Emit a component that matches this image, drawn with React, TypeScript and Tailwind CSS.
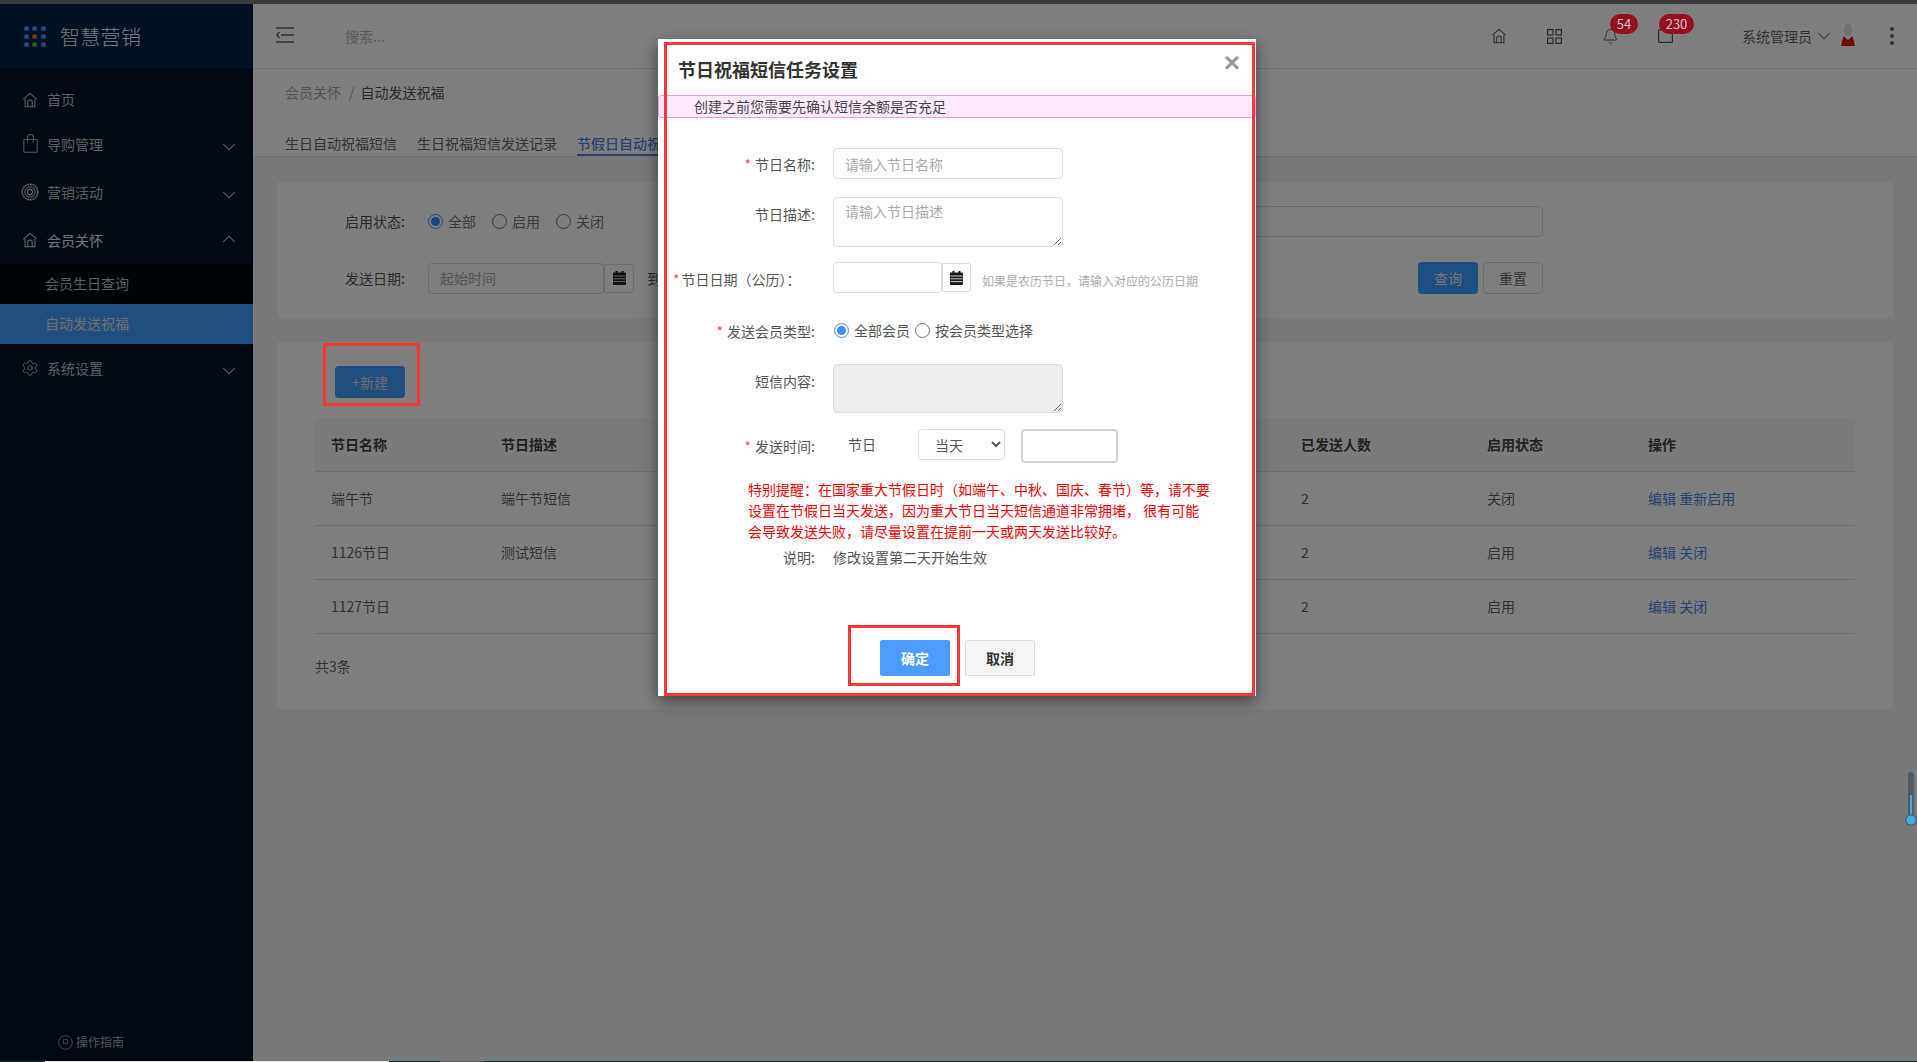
import React from "react";
import { ChevronDown, ChevronUp, Settings, Bell } from "lucide-react";

function HomeIcon({ size = 18, color = "#cfcfcf" }: { size?: number; color?: string }) {
  return (
    <svg width={size} height={size} viewBox="0 0 18 18" fill="none" stroke={color} strokeWidth="1.2">
      <path d="M1.5 8 L9 1.5 L16.5 8" />
      <path d="M3.5 8 V16.5 H14.5 V8" />
      <path d="M6.5 16.5 V11.5 a2.5 2.5 0 0 1 5 0 V16.5" />
    </svg>
  );
}

function BagIcon() {
  return (
    <svg width="15" height="19" viewBox="0 0 15 19" fill="none" stroke="#a8a8a8" strokeWidth="1.1" className="mt-[-2px]">
      <rect x="0.8" y="5.5" width="13.4" height="12.7" rx="0.8" />
      <path d="M4.5 8.5 V3.5 a3 3 0 0 1 6 0 V8.5" />
    </svg>
  );
}

function TargetIcon() {
  return (
    <svg width="18" height="18" viewBox="0 0 18 18" fill="none" stroke="#bdbdbd" strokeWidth="1.1">
      <circle cx="9" cy="9" r="7.8" strokeWidth="1.6" strokeDasharray="2 0.6" />
      <circle cx="9" cy="9" r="5.2" />
      <circle cx="9" cy="9" r="2.6" />
    </svg>
  );
}

function CalIcon() {
  return (
    <svg width="13" height="14" viewBox="0 0 13 14">
      <rect x="2.5" y="0" width="2" height="3" fill="#1c1c1c" />
      <rect x="8.5" y="0" width="2" height="3" fill="#1c1c1c" />
      <rect x="0" y="1.5" width="13" height="12.5" rx="0.8" fill="#1c1c1c" />
      <path d="M0.5 5 H12.5 M0.5 7.8 H12.5 M0.5 10.6 H12.5" stroke="#ffffff" strokeWidth="0.8" />
    </svg>
  );
}

function NavItem({ icon, label, open, chevron, bright }: { icon: React.ReactNode; label: string; open?: boolean; chevron?: boolean; bright?: boolean }) {
  return (
    <div className={`flex h-[48px] items-center pl-[21px] pr-[13px] text-[14px] leading-[20px] ${bright ? "text-[#e8e8e8]" : "text-[#bdbdbd]"}`}>
      <span className="flex w-[18px] justify-center">{icon}</span>
      <span className="mt-[-1px] ml-[8px] flex-1">{label}</span>
      {chevron && (open ? <ChevronUp size={22} strokeWidth={1.1} className="mt-[-2px] text-[#dddddd]" /> : <ChevronDown size={22} strokeWidth={1.1} className="mt-[6px] text-[#dddddd]" />)}
    </div>
  );
}

function Sidebar() {
  const dots = ["#3f8fff", "#3f8fff", "#3f8fff", "#3f8fff", "#e8741a", "#3f8fff", "#3f8fff", "#46b034", "#3f8fff"];
  return (
    <aside className="flex w-[253px] shrink-0 flex-col bg-[#021428]">
      <div className="flex h-[64px] items-center bg-[#062246] pl-[24px]">
        <div className="grid w-[22px] grid-cols-3 gap-[3px]">
          {dots.map((c, i) => (
            <span key={i} className="h-[5px] w-[5px] rounded-full" style={{ backgroundColor: c }} />
          ))}
        </div>
        <span className="mt-[2px] ml-[14px] text-[20px] leading-[28px] font-light tracking-[0.3px] text-[#f0f0f0]">智慧营销</span>
      </div>
      <div className="mt-[12px] flex h-[40px] items-center pl-[21px] text-[14px] leading-[20px] text-[#bdbdbd]">
        <span className="flex w-[18px] justify-center"><HomeIcon size={16} color="#bdbdbd" /></span>
        <span className="mt-[-2px] ml-[8px]">首页</span>
      </div>
      <NavItem icon={<BagIcon />} label="导购管理" chevron />
      <NavItem icon={<TargetIcon />} label="营销活动" chevron />
      <NavItem icon={<HomeIcon size={16} color="#cfcfcf" />} label="会员关怀" chevron open bright />
      <div className="flex h-[40px] items-center bg-[#00060e] pb-[2px] pl-[45px] text-[14px] text-[#bdbdbd]">会员生日查询</div>
      <div className="flex h-[40px] items-center bg-[#409eff] pb-[1px] pl-[45px] text-[14px] text-[#e0e0e0]">自动发送祝福</div>
      <NavItem icon={<Settings size={18} strokeWidth={1.3} />} label="系统设置" chevron />
      <div className="mt-auto mb-[9px] flex h-[20px] items-center pl-[58px] text-[12px] text-[#a8a8a8]">
        <svg width="15" height="15" viewBox="0 0 15 15" fill="none" stroke="#8a8a8a">
          <circle cx="7.5" cy="7.5" r="6.8" />
          <path d="M5.5 4.5 H9.5 V8.5 H5.5 Z" strokeWidth="0.9" />
        </svg>
        <span className="ml-[3px]">操作指南</span>
      </div>
    </aside>
  );
}

function HeaderBar() {
  return (
    <div className="flex h-[64px] items-center bg-white pl-[23px] text-[#666666]">
      <svg width="18" height="16" viewBox="0 0 18 16" fill="none" stroke="#555555" strokeWidth="1.3" className="mt-[-3px]">
        <path d="M0 1 H18" />
        <path d="M5 8 H18" />
        <path d="M0 15 H18" />
        <path d="M3.5 5 L0.8 8 L3.5 11" />
      </svg>
      <span className="ml-[51px] text-[14px] text-[#b8b8b8]">搜索...</span>
      <div className="ml-auto flex items-center">
        <HomeIcon size={16} color="#555555" />
        <svg width="15" height="15" viewBox="0 0 15 15" fill="none" stroke="#555555" strokeWidth="1.2" className="ml-[40px]">
          <rect x="0.6" y="0.6" width="5.4" height="5.4" />
          <rect x="9" y="0.6" width="5.4" height="5.4" />
          <rect x="0.6" y="9" width="5.4" height="5.4" />
          <rect x="9" y="9" width="5.4" height="5.4" />
        </svg>
        <Bell size={17} strokeWidth={1.3} className="ml-[40px] text-[#555555]" />
        <svg width="15" height="14" viewBox="0 0 15 14" fill="none" stroke="#555555" strokeWidth="1.2" className="ml-[39px]">
          <rect x="0.6" y="0.6" width="13.8" height="12.8" rx="1" />
        </svg>
        <span className="ml-[69px] text-[14px] leading-[20px] text-[#666666]">系统管理员</span>
        <ChevronDown size={22} strokeWidth={1.1} className="ml-px text-[#666666]" />
        <svg width="20" height="24" viewBox="0 0 20 24" className="ml-[3px] mt-[-3px]">
          <ellipse cx="10" cy="7" rx="4" ry="6.5" fill="#f0e0e0" />
          <path d="M3 23 L5.5 13 L10 17 L14.5 13 L17 23 Z" fill="#e01515" />
          <path d="M8.6 12 L11.4 12 L10 17 Z" fill="#ffffff" />
        </svg>
        <div className="ml-[32px] mr-[23px] flex flex-col gap-[3px]">
          <span className="h-[4px] w-[4px] rounded-full bg-[#707070]" />
          <span className="h-[4px] w-[4px] rounded-full bg-[#707070]" />
          <span className="h-[4px] w-[4px] rounded-full bg-[#707070]" />
        </div>
      </div>
    </div>
  );
}

function Radio({ label, checked }: { label: string; checked?: boolean }) {
  return (
    <label className="flex items-center">
      <input type="radio" name="status" defaultChecked={checked} className="h-[15px] w-[15px] accent-[#3f8cff]" />
      <span className="ml-[5px] text-[14px] text-[#777777]">{label}</span>
    </label>
  );
}

function Filter() {
  return (
    <section className="mx-[24px] mt-[25px] h-[136px] bg-white pt-[24px] pl-[68px] pr-[350px]">
      <div className="flex h-[31px] items-center">
        <span className="w-[83px] text-[14px] text-[#555555]">启用状态:</span>
        <div className="flex gap-[16px]">
          <Radio label="全部" checked />
          <Radio label="启用" />
          <Radio label="关闭" />
        </div>
        <div className="ml-auto h-[31px] w-[500px] rounded-[4px] border border-[#d8d8d8]" />
      </div>
      <div className="mt-[25px] flex h-[32px] items-center">
        <span className="w-[83px] text-[14px] text-[#555555]">发送日期:</span>
        <div className="flex h-[31px] w-[176px] items-center rounded-[4px] border border-[#d8d8d8] pl-[11px] text-[14px] text-[#aaaaaa]">起始时间</div>
        <div className="flex h-[29px] w-[30px] items-center justify-center rounded-r-[3px] border border-[#d8d8d8]">
          <CalIcon />
        </div>
        <span className="ml-[13px] text-[14px] text-[#555555]">到</span>
        <button className="ml-auto h-[32px] w-[60px] rounded-[4px] bg-[#409eff] text-[14px] text-[#eeeeee]">查询</button>
        <button className="ml-[5px] h-[32px] w-[60px] rounded-[4px] border border-[#d8d8d8] bg-white text-[14px] text-[#666666]">重置</button>
      </div>
    </section>
  );
}

function Table() {
  const rows = [
    ["端午节", "端午节短信", "2", "关闭", "编辑 重新启用"],
    ["1126节日", "测试短信", "2", "启用", "编辑 关闭"],
    ["1127节日", "", "2", "启用", "编辑 关闭"],
  ];
  return (
    <table className="w-[1540px] table-fixed text-[14px]">
      <colgroup>
        <col className="w-[170px]" />
        <col className="w-[800px]" />
        <col className="w-[186px]" />
        <col className="w-[161px]" />
        <col className="w-[223px]" />
      </colgroup>
      <thead>
        <tr className="h-[53px] border-b border-[#dcdcdc] bg-[#f6f6f6] text-left font-bold text-[#444444]">
          <th className="pl-[16px]">节日名称</th>
          <th className="pl-[16px]">节日描述</th>
          <th className="pl-[16px]">已发送人数</th>
          <th className="pl-[16px]">启用状态</th>
          <th className="pl-[16px]">操作</th>
        </tr>
      </thead>
      <tbody>
        {rows.map((r) => (
          <tr key={r[0]} className="h-[54px] border-b border-[#dcdcdc] text-[#666666]">
            <td className="pl-[16px]">{r[0]}</td>
            <td className="pl-[16px]">{r[1]}</td>
            <td className="pl-[16px]">{r[2]}</td>
            <td className="pl-[16px]">{r[3]}</td>
            <td className="pl-[16px] text-[#4a86e0]">{r[4]}</td>
          </tr>
        ))}
      </tbody>
    </table>
  );
}

function FormRow({ label, star, top, className, children }: { label: string; star?: boolean; top: number; className: string; children: React.ReactNode }) {
  return (
    <div className={`flex items-start ${className}`}>
      <div className="w-[157px] shrink-0 text-right text-[14px] leading-[20px] text-[#555555]" style={{ paddingTop: top }}>
        {star && <span className="mr-[4px] text-[#ff4d4f]">*</span>}
        {label}
      </div>
      <div className="ml-[18px] flex items-start">{children}</div>
    </div>
  );
}

function Modal() {
  return (
    <div className="absolute top-[35px] left-[658px] h-[657px] w-[598px] bg-white shadow-[0_5px_15px_rgba(0,0,0,0.5)]">
      <h2 className="ml-[20px] mt-[17px] text-[18px] leading-[26px] font-bold text-[#333333]">节日祝福短信任务设置</h2>
      <span className="absolute top-[10px] right-[16px] font-['Liberation_Sans',sans-serif] text-[28px] leading-[28px] font-bold text-[#9a9a9a]">×</span>
      <div className="mt-[13px] h-[23px] rounded-[3px] border border-[#f29af2] bg-[#fdeafd] pl-[35px] text-[14px] leading-[21px] text-[#444444]">创建之前您需要先确认短信余额是否充足</div>

      <FormRow label="节日名称:" star top={6} className="mt-[30px]">
        <input placeholder="请输入节日名称" className="h-[31px] w-[230px] rounded-[4px] border border-[#dddddd] px-[11px] text-[14px] placeholder:text-[#aaaaaa]" />
      </FormRow>
      <FormRow label="节日描述:" top={7} className="mt-[18px]">
        <textarea placeholder="请输入节日描述" className="block h-[50px] w-[230px] resize rounded-[4px] border border-[#dddddd] px-[11px] pt-[3px] text-[14px] leading-[20px] placeholder:text-[#aaaaaa]" />
      </FormRow>
      <div className="mt-[15px] flex items-start">
        <div className="w-[157px] shrink-0 pt-[7px] pl-[15px] text-[14px] leading-[20px] whitespace-nowrap text-[#555555]">
          <span className="mr-[2px] text-[#ff4d4f]">*</span>节日日期（公历）：
        </div>
        <div className="ml-[18px] flex items-start">
          <input className="h-[31px] w-[109px] rounded-[4px] border border-[#dddddd]" />
          <div className="mt-[1px] flex h-[29px] w-[29px] items-center justify-center rounded-r-[3px] border border-[#dddddd]">
            <CalIcon />
          </div>
          <span className="mt-[9px] ml-[11px] text-[12px] leading-[20px] text-[#aaaaaa]">如果是农历节日，请输入对应的公历日期</span>
        </div>
      </div>
      <FormRow label="发送会员类型:" star top={1} className="mt-[27px]">
        <div className="flex h-[20px] items-center pl-px text-[14px] text-[#555555]">
          <input type="radio" name="member" defaultChecked className="h-[15px] w-[15px] accent-[#3f8cff]" />
          <span className="ml-[5px]">全部会员</span>
          <input type="radio" name="member" className="ml-[5px] h-[15px] w-[15px]" />
          <span className="ml-[5px]">按会员类型选择</span>
        </div>
      </FormRow>
      <FormRow label="短信内容:" top={7} className="mt-[23px]">
        <textarea disabled className="block h-[49px] w-[230px] resize rounded-[4px] border border-[#dddddd] bg-[#eeeeee]" />
      </FormRow>
      <FormRow label="发送时间:" star top={7} className="mt-[16px]">
        <span className="mt-[5px] ml-[15px] text-[14px] leading-[20px] text-[#555555]">节日</span>
        <select className="ml-[42px] h-[31px] w-[87px] rounded-[4px] border border-[#dddddd] bg-white pl-[12px] text-[14px] text-[#555555]">
          <option>当天</option>
        </select>
        <input className="ml-[16px] h-[34px] w-[97px] rounded-[4px] border-2 border-[#d4d4d4]" />
      </FormRow>
      <p className="mt-[16px] ml-[90px] text-[14px] leading-[21px] whitespace-pre text-[#ff0000]">
        特别提醒：在国家重大节假日时（如端午、中秋、国庆、春节）等，请不要
        <br />
        设置在节假日当天发送，因为重大节日当天短信通道非常拥堵， 很有可能
        <br />
        会导致发送失败，请尽量设置在提前一天或两天发送比较好。
      </p>
      <FormRow label="说明:" top={0} className="mt-[5px]">
        <span className="text-[14px] leading-[20px] text-[#555555]">修改设置第二天开始生效</span>
      </FormRow>
      <div className="mt-[73px] ml-[222px] flex gap-[15px]">
        <button className="h-[36px] w-[70px] rounded-[2px] bg-[#4c9bff] text-[14px] font-bold text-white">确定</button>
        <button className="h-[36px] w-[70px] rounded-[2px] border border-[#dddddd] bg-[#f5f5f5] text-[14px] font-bold text-[#333333]">取消</button>
      </div>
    </div>
  );
}

export default function App() {
  return (
    <div className="relative flex h-[1062px] w-[1917px] flex-col overflow-hidden font-['Noto_Sans_CJK_SC',sans-serif]">
      <div className="h-[4px] shrink-0 bg-[#3a3b3d]" />
      <div className="relative flex min-h-0 flex-1">
        <Sidebar />
        <main className="min-w-0 flex-1 bg-[#f1f2f2]">
          <HeaderBar />
          <div className="border-t border-[#e2e2e2] bg-white pl-[32px]">
            <div className="mt-[10px] flex h-[25px] items-center pt-[1px] text-[14px]">
              <span className="text-[#aaaaaa]">会员关怀</span>
              <span className="mr-[6px] ml-[8px] text-[#aaaaaa]">/</span>
              <span className="text-[#555555]">自动发送祝福</span>
            </div>
            <div className="mt-[29px] flex h-[23px] gap-[20px] text-[14px] text-[#666666]">
              <span>生日自动祝福短信</span>
              <span>生日祝福短信发送记录</span>
              <span className="h-[23px] border-b-2 border-[#4a86e0] font-medium text-[#4a86e0]">节假日自动祝福短信</span>
            </div>
          </div>
          <div className="h-px bg-[#e2e2e2]" />
          <Filter />
          <section className="mx-[24px] mt-[24px] h-[367px] bg-white pt-[24px]">
            <button className="ml-[58px] h-[32px] w-[70px] rounded-[4px] bg-[#409eff] text-[14px] text-[#dddddd]">+新建</button>
            <div className="mt-[20px] ml-[38px]">
              <Table />
            </div>
            <div className="mt-[22px] ml-[38px] text-[14px] leading-[20px] text-[#666666]">共3条</div>
          </section>
        </main>
        <div className="absolute inset-0 bg-black/50" />
        <div className="absolute top-[10px] left-[1610px] flex h-[20px] w-[28px] items-center justify-center rounded-full bg-[#961020] text-[13px] text-[#dcc4c4]">54</div>
        <div className="absolute top-[10px] left-[1659px] flex h-[20px] w-[35px] items-center justify-center rounded-full bg-[#961020] text-[13px] text-[#dcc4c4]">230</div>
        <svg width="12" height="56" viewBox="0 0 12 56" className="absolute top-[767px] left-[1905px]" fill="none">
          <rect x="3" y="1" width="6" height="50" rx="3" fill="#4c5c68" />
          <rect x="5" y="24" width="2" height="24" fill="#3eb0e8" />
          <circle cx="6" cy="49" r="6" fill="#55606a" />
          <circle cx="6" cy="49" r="4.5" fill="#3eb0e8" />
        </svg>
        <Modal />
        <div className="pointer-events-none absolute top-[38px] left-[664px] h-[654px] w-[591px] border-[3px] border-[#f83636]" />
        <div className="pointer-events-none absolute top-[339px] left-[323px] h-[63px] w-[97px] border-[3px] border-[#f83636]" />
        <div className="pointer-events-none absolute top-[621px] left-[848px] h-[61px] w-[112px] border-[3px] border-[#f83636]" />
      </div>
      <div className="flex h-px shrink-0 bg-[#22343a]">
        <div className="ml-[45px] w-[344px] bg-[#e0e0e0]" />
        <div className="ml-[51px] w-[44px] bg-[#555555]" />
      </div>
    </div>
  );
}
